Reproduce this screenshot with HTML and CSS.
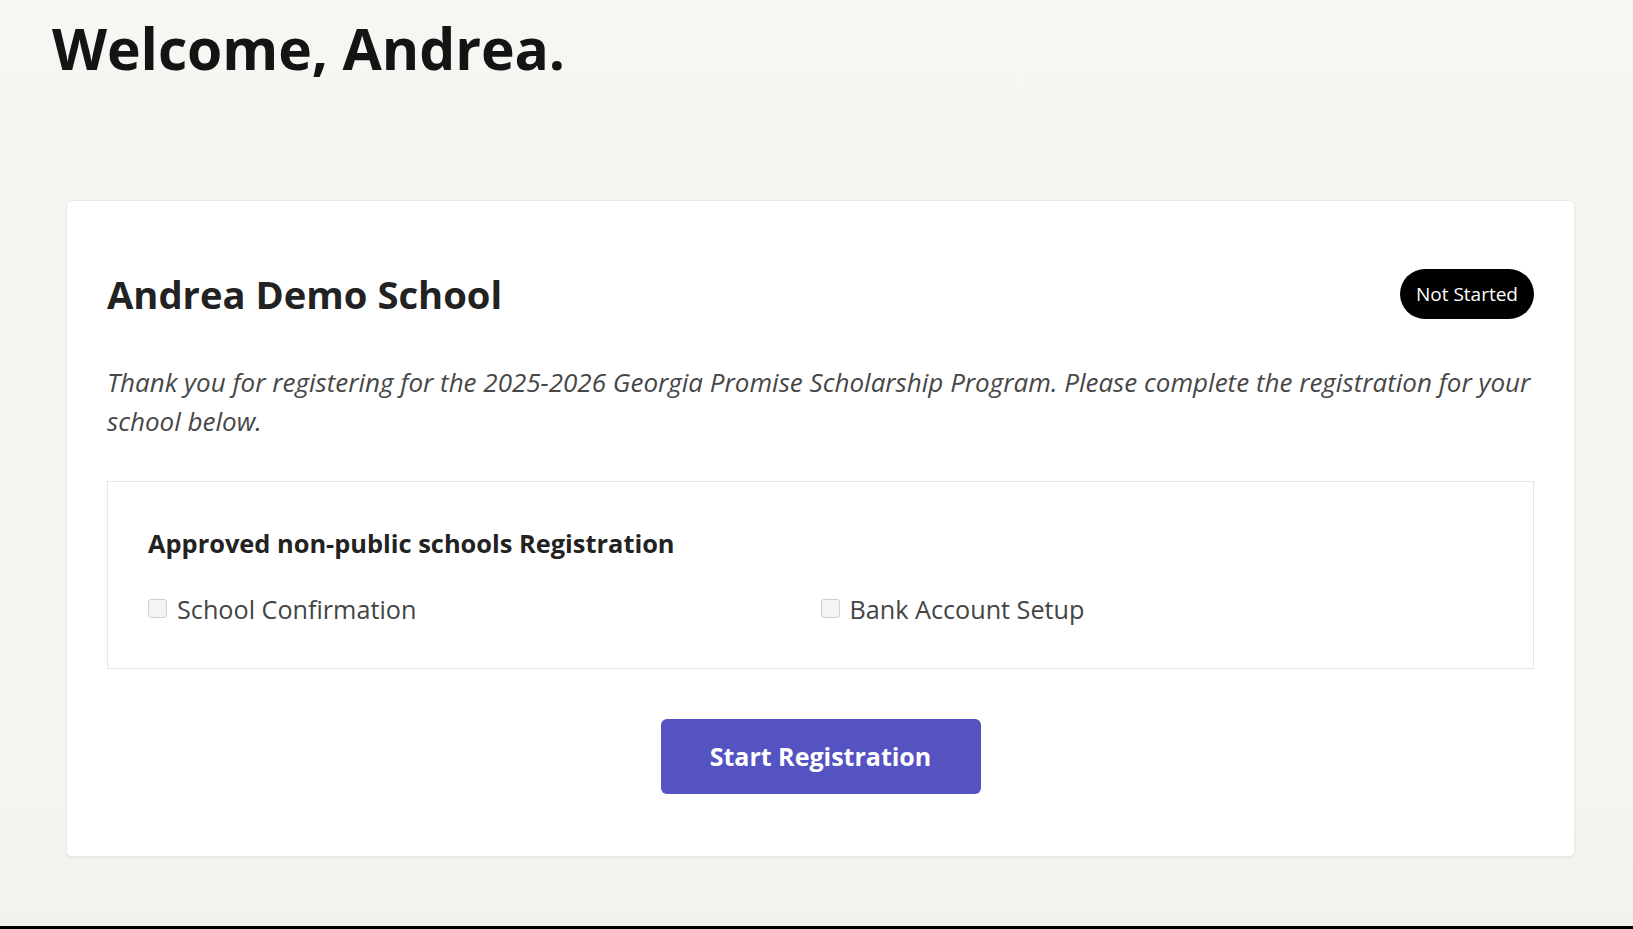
FILE: index.html
```html
<!DOCTYPE html>
<html lang="en">
<head>
<meta charset="utf-8">
<title>Welcome</title>
<link rel="stylesheet" href="styles.css">
</head>
<body>
<div class="page">
  <header class="page-header">
    <h1 class="welcome">Welcome, Andrea.</h1>
  </header>
  <main class="page-main">
    <section class="card">
      <div class="card-head">
        <h2 class="school-name">Andrea Demo School</h2>
        <span class="status-badge">Not Started</span>
      </div>
      <p class="intro">Thank you for registering for the 2025-2026 Georgia Promise Scholarship Program. Please complete the registration for your school below.</p>
      <div class="steps-box">
        <h3 class="steps-title">Approved non-public schools Registration</h3>
        <div class="steps-grid">
          <label class="step"><span class="check"></span><span class="step-label">School Confirmation</span></label>
          <label class="step"><span class="check"></span><span class="step-label">Bank Account Setup</span></label>
        </div>
      </div>
      <div class="actions">
        <button class="primary-btn" type="button">Start Registration</button>
      </div>
    </section>
  </main>
  <div class="bottom-bar"></div>
</div>
</body>
</html>
```
FILE: styles.css
```css
html, body {
  margin: 0;
  padding: 0;
}
body {
  font-family: "Open Sans", "Noto Sans", "Liberation Sans", sans-serif;
  background: linear-gradient(#f7f6f2 0%, #f6f5f1 80%, #f2f1ec 100%);
  color: #222;
}
.page {
  min-height: 100vh;
  display: flex;
  flex-direction: column;
}
.page-header {
  padding: 14px 52px 0 52px;
}
.welcome {
  margin: 0;
  font-size: 57px;
  line-height: 1.2;
  font-weight: 700;
  color: #141414;
  letter-spacing: -0.1px;
}
.page-main {
  padding: 118px 58px 0 66px;
}
.card {
  background: #fff;
  border: 1px solid #ebeae7;
  border-radius: 6px;
  box-shadow: 0 1px 2px rgba(0, 0, 0, 0.07);
  padding: 68px 40px 62px 40px;
}
.card-head {
  display: flex;
  align-items: center;
  justify-content: space-between;
  height: 50px;
}
.school-name {
  margin: 0;
  font-size: 38.2px;
  line-height: 1.25;
  font-weight: 700;
  color: #222;
}
.status-badge {
  background: #000;
  color: #fff;
  border-radius: 25px;
  height: 50px;
  padding: 0 16px;
  display: inline-flex;
  align-items: center;
  font-size: 19px;
}
.intro {
  margin: 44px 0 0 0;
  font-style: italic;
  font-size: 26px;
  line-height: 39px;
  color: #474747;
}
.steps-box {
  margin-top: 40px;
  border: 1px solid #e6e6e6;
  padding: 46px 40px 39px 40px;
}
.steps-title {
  margin: 0;
  font-size: 25.4px;
  line-height: 1.2;
  font-weight: 700;
  color: #222;
}
.steps-grid {
  margin-top: 32px;
  display: grid;
  grid-template-columns: 1fr 1fr;
}
.step {
  display: flex;
  align-items: center;
  gap: 10px;
  font-size: 25.2px;
  line-height: 1.5;
  color: #444;
}
.check {
  width: 17px;
  height: 17px;
  border: 1px solid #cfcfcf;
  border-radius: 3px;
  background: #f4f4f4;
  flex: none;
  margin-top: -3px;
}
.actions {
  margin-top: 50px;
  display: flex;
  justify-content: center;
}
.primary-btn {
  background: #5552c2;
  color: #fff;
  border: none;
  border-radius: 6px;
  font-family: inherit;
  font-weight: 700;
  font-size: 25px;
  line-height: 31px;
  padding: 22px 0;
  width: 320px;
}
.bottom-bar {
  margin-top: auto;
  height: 3px;
  background: #000;
}
```
